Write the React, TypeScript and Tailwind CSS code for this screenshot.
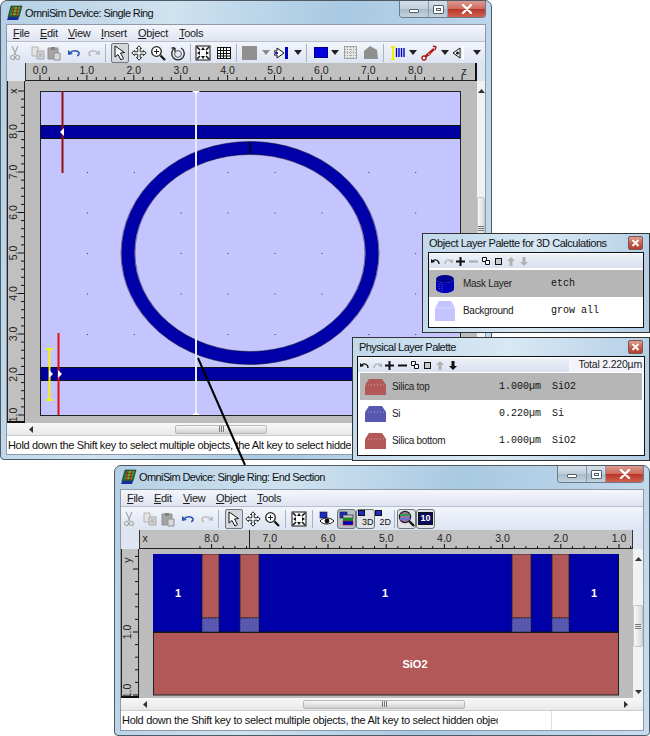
import React from "react";

const ui = "[font-family:'Liberation_Sans',Arial,sans-serif]";
const mono = "[font-family:'Liberation_Mono','Courier_New',monospace]";
const RF = "Liberation Sans";

const Logo = () => (
  <svg width="16" height="16" viewBox="0 0 16 16" className="shrink-0">
    <polygon points="4,1 15,1 12,12 1,12" fill="#1c7a30" stroke="#123" strokeWidth="0.6" />
    <polygon points="1,12 12,12 11,15 0,15" fill="#1a2a9a" />
    <path d="M6 3h7M5 6h7M4 9h7" stroke="#e0c020" strokeWidth="1.2" />
    <path d="M7 2 5 11M11 2 9 11" stroke="#b02020" strokeWidth="1.2" />
  </svg>
);

const Buttons = () => (
  <div className="flex h-[17px] w-[87px] shrink-0 overflow-hidden rounded-b-[4px] border border-t-0 border-[#6b7b88]">
    <div className="flex w-[29px] items-center justify-center border-r border-[#8a9aa8] bg-[linear-gradient(#d4dfe8,#c2d0dc_50%,#a9bac8_50%,#c2d2de)]">
      <div className="mt-[3px] h-[4px] w-[10px] rounded-[1px] border border-[#52606c] bg-white" />
    </div>
    <div className="flex w-[19px] items-center justify-center border-r border-[#8a9aa8] bg-[linear-gradient(#d4dfe8,#c2d0dc_50%,#a9bac8_50%,#c2d2de)]">
      <div className="flex h-[9px] w-[11px] items-center justify-center rounded-[1px] border border-[#52606c] bg-white">
        <div className="h-[3px] w-[5px] border border-[#52606c]" />
      </div>
    </div>
    <div className="flex flex-1 items-center justify-center bg-[linear-gradient(#dc9a90,#cf6a5c_50%,#b8332a_50%,#d0604c)]">
      <svg width="12" height="10" viewBox="0 0 12 10"><path d="M2 1l8 8M10 1 2 9" stroke="#fff" strokeWidth="2.4" strokeLinecap="round" /></svg>
    </div>
  </div>
);

const SmallClose = () => (
  <div className="flex h-[14px] w-[15px] items-center justify-center rounded-[2px] border border-[#7a5a50] bg-[linear-gradient(#e0a090,#c8604c_50%,#b83c2c)]">
    <svg width="9" height="8" viewBox="0 0 9 8"><path d="M1.5 1l6 6M7.5 1l-6 6" stroke="#fff" strokeWidth="1.8" /></svg>
  </div>
);

const Caret = ({ className = "" }: { className?: string }) => (
  <svg width="8" height="5" viewBox="0 0 8 5" className={"shrink-0 " + className}><polygon points="0,0 8,0 4,5" fill="#222" /></svg>
);
const CaretGray = ({ className = "" }: { className?: string }) => (
  <svg width="8" height="5" viewBox="0 0 8 5" className={"shrink-0 " + className}><polygon points="0,0 8,0 4,5" fill="#8a8a8a" /></svg>
);
const Sep = ({ className = "" }: { className?: string }) => (
  <div className={"h-[18px] w-px shrink-0 bg-[#a9b3c0] " + className} />
);

type IP = { className?: string };
const Ic = ({ className = "", children }: IP & { children: React.ReactNode }) => (
  <svg width="16" height="16" viewBox="0 0 16 16" fill="none" className={"shrink-0 " + className}>{children}</svg>
);
const Scissors = (p: IP) => (
  <Ic {...p}>
    <path d="M5 1l4 9M11 1 7 10" stroke="#a8a8a8" strokeWidth="1.2" />
    <circle cx="5.5" cy="12.5" r="2" stroke="#a8a8a8" strokeWidth="1.2" />
    <circle cx="10.5" cy="12.5" r="2" stroke="#a8a8a8" strokeWidth="1.2" />
  </Ic>
);
const CopyI = (p: IP) => (
  <Ic {...p}>
    <path d="M2 2h6v9H2z" fill="#e4e4e4" stroke="#b4b4b4" />
    <path d="M7 6h7v8H7z" fill="#d4d4d4" stroke="#a8a8a8" />
    <path d="M9 9h3M9 11h3" stroke="#a0a0a0" />
  </Ic>
);
const Paste = (p: IP) => (
  <Ic {...p}>
    <path d="M2 3h10v11H2z" fill="#a4a4a4" stroke="#909090" />
    <path d="M5 2h4v3H5z" fill="#808080" />
    <path d="M8 8h6v7H8z" fill="#d8d8d8" stroke="#909090" />
  </Ic>
);
const Undo = (p: IP) => (
  <Ic {...p}>
    <path d="M4 8c2-3 8-3 9 0 .3 1.3-.5 2.6-2 2.6" stroke="#2a58b0" strokeWidth="1.6" />
    <polygon points="2,5 7,9 2,10" fill="#2a58b0" />
  </Ic>
);
const Redo = (p: IP) => (
  <Ic {...p}>
    <path d="M12 8C10 5 4 5 3 8c-.3 1.3.5 2.6 2 2.6" stroke="#bcbcbc" strokeWidth="1.6" />
    <polygon points="14,5 9,9 14,10" fill="#bcbcbc" />
  </Ic>
);
const Pointer = () => (
  <div className="flex h-[20px] w-[18px] shrink-0 items-center justify-center rounded-[2px] border border-[#70767c] bg-[#d4d8de]">
    <svg width="15" height="16" viewBox="0 0 15 16"><path d="M2 1l0 11 3-2.5 3 5.5 2.5-1.5-3-5.5 4-.5z" fill="#fff" stroke="#111" /></svg>
  </div>
);
const Move = (p: IP) => (
  <Ic {...p}>
    <path d="M8 .8 10.5 3.5H9.2V6.8H12.5V5.5L15.2 8 12.5 10.5V9.2H9.2V12.5H10.5L8 15.2 5.5 12.5H6.8V9.2H3.5V10.5L.8 8 3.5 5.5V6.8H6.8V3.5H5.5Z" fill="#fff" stroke="#111" strokeWidth="0.9" />
  </Ic>
);
const Zoom = (p: IP) => (
  <Ic {...p}>
    <circle cx="6.5" cy="6.5" r="4.8" fill="#fff" stroke="#222" strokeWidth="1.3" />
    <path d="M4 6.5h5M6.5 4v5" stroke="#222" />
    <path d="M10.5 10.5l4.5 4.5" stroke="#111" strokeWidth="2.2" />
  </Ic>
);
const Rotate = (p: IP) => (
  <Ic {...p}>
    <path d="M5 3a6.3 6.3 0 1 0 6 0" stroke="#222" strokeWidth="1.3" />
    <path d="M5 3v4M5 3H1.5" stroke="#222" strokeWidth="1.3" />
    <circle cx="8" cy="9" r="3.4" stroke="#555" />
  </Ic>
);
const Fit = (p: IP) => (
  <Ic {...p}>
    <rect x="1" y="1" width="14" height="14" fill="#fff" stroke="#111" />
    <polygon points="8,2 10,5 6,5" fill="#111" /><polygon points="8,14 10,11 6,11" fill="#111" />
    <polygon points="2,8 5,6 5,10" fill="#111" /><polygon points="14,8 11,6 11,10" fill="#111" />
    <path d="M2 2l3 3M14 2l-3 3M2 14l3-3M14 14l-3-3" stroke="#111" strokeWidth="1.5" />
  </Ic>
);
const GridI = (p: IP) => (
  <Ic {...p}>
    <rect x="1.5" y="2.5" width="13" height="11" fill="#fff" stroke="#111" />
    <path d="M4.5 2.5v11M7.5 2.5v11M10.5 2.5v11M1.5 5.5h13M1.5 8.5h13M1.5 11h13" stroke="#111" />
  </Ic>
);
const ArrowBar = (p: IP) => (
  <Ic {...p}>
    <path d="M0 6h3V3l7 5-7 5v-3H0z" fill="#fff" stroke="#111" />
    <rect x="1" y="7" width="3" height="2" fill="#1a1ad0" />
    <rect x="11" y="2" width="3" height="12" fill="#0000c8" />
  </Ic>
);
const GridGray = (p: IP) => (
  <Ic {...p}>
    <rect x="1.5" y="1.5" width="12" height="12" fill="#e8e8e8" stroke="#a0a0a0" />
    <path d="M4.5 2v11M7.5 2v11M10.5 2v11M2 4.5h11M2 7.5h11M2 10.5h11" stroke="#a8a8a8" strokeDasharray="1 1" />
  </Ic>
);
const Poly = (p: IP) => (
  <Ic {...p}>
    <polygon points="7,1 14,5 15,14 1,14 1,6" fill="#8f8f8f" />
  </Ic>
);
const Lines = (p: IP) => (
  <Ic {...p}>
    <path d="M6.5 3v9M9 3v9M11.5 3v9M14 3v9" stroke="#0000c8" strokeWidth="1.4" />
    <path d="M3 2v12M1 2h4M1 14h4" stroke="#f0f000" strokeWidth="2" />
  </Ic>
);
const Wrench = (p: IP) => (
  <Ic {...p}>
    <path d="M3 13l10-9" stroke="#b01818" strokeWidth="2.4" />
    <circle cx="3" cy="13" r="2" fill="#fff" stroke="#b01818" strokeWidth="1.4" />
    <circle cx="8" cy="9" r="1.2" fill="#fff" stroke="#b01818" />
    <path d="M12 1l3 1-1 3" stroke="#b01818" strokeWidth="1.4" />
  </Ic>
);
const EyeWedge = (p: IP) => (
  <Ic {...p}>
    <path d="M1 8l7-5v10z" fill="#fff" stroke="#111" />
    <circle cx="5.5" cy="8" r="1.5" fill="#111" />
    <path d="M11 1v14" stroke="#fff" strokeWidth="2" />
  </Ic>
);
const Eye = (p: IP) => (
  <Ic {...p}>
    <rect x="1" y="1" width="7" height="6" fill="#1c2ccc" stroke="#111" strokeWidth="0.6" />
    <path d="M1 10c3-4 10-4 14 0-4 4-11 4-14 0z" fill="#fff" stroke="#111" />
    <circle cx="8" cy="10" r="2.4" fill="#111" />
  </Ic>
);
const ViewBtn = ({ on, children }: { on?: boolean; children: React.ReactNode }) => (
  <div className={"flex h-[20px] w-[19px] shrink-0 items-center justify-center rounded-[3px] border border-[#70767c] " + (on ? "bg-[#b8bec6]" : "bg-[#dfe3e8]")}>{children}</div>
);
const Stack = () => (
  <svg width="15" height="15" viewBox="0 0 15 15">
    <rect x="1" y="1" width="7" height="6" fill="#1c2ccc" stroke="#111" strokeWidth="0.6" />
    <rect x="4" y="4" width="10" height="3" fill="#c8c8c8" stroke="#111" strokeWidth="0.6" />
    <rect x="4" y="7" width="10" height="3" fill="#109020" />
    <rect x="4" y="10" width="10" height="4" fill="#0000c0" stroke="#c02020" strokeWidth="0.6" />
  </svg>
);
const DimIcon = ({ label }: { label: string }) => (
  <div className="relative h-[17px] w-[16px]">
    <div className="h-[6px] w-[7px] border border-[#111] bg-[#1c2ccc]" />
    <span className={"absolute bottom-[-1px] right-[0px] text-[9px] leading-[11px] text-[#111] " + ui}>{label}</span>
  </div>
);
const Magnify = () => (
  <svg width="17" height="17" viewBox="0 0 17 17">
    <circle cx="7" cy="7" r="5.6" fill="#a070a0" stroke="#222" strokeWidth="1.2" />
    <path d="M2 5h10" stroke="#30a050" strokeWidth="2" />
    <path d="M2 9h10" stroke="#7070d0" strokeWidth="2.5" />
    <path d="M11 11l5 5" stroke="#111" strokeWidth="2.4" />
  </svg>
);

const MenuBar = ({ items }: { items: [string, string][] }) => (
  <div className={"flex h-[17px] shrink-0 items-center border-b border-[#b9bfca] bg-[linear-gradient(#f4f6fb,#dfe4f1)] pl-[6px] text-[11px] tracking-[-0.3px] text-[#1a1a1a] " + ui}>
    {items.map(([a, cls]) => (
      <span key={a} className={cls}><span className="underline underline-offset-1">{a[0]}</span>{a.slice(1)}</span>
    ))}
  </div>
);

const Ruler1 = () => {
  const ticks = [];
  for (let i = 0; i <= 45; i++) {
    const x = 40 + (i * 46.9) / 5;
    ticks.push(<line key={i} x1={x} x2={x} y1={i % 5 === 0 ? 75 : 77} y2={80} stroke="#111" strokeWidth="1" />);
  }
  const labels = ["0.0", "1.0", "2.0", "3.0", "4.0", "5.0", "6.0", "7.0", "8.0"];
  return (
    <svg width="452" height="18" viewBox="25 63 452 18" className="block shrink-0">
      <rect x="25" y="63" width="452" height="18" fill="#c0c0c0" />
      <line x1="25.5" x2="25.5" y1="63" y2="81" stroke="#333" />
      <line x1="25" x2="477" y1="80.5" y2="80.5" stroke="#222" />
      <rect x="475" y="63" width="2" height="18" fill="#111" />
      {ticks}
      {labels.map((t, i) => (
        <text key={t} x={40 + i * 46.9} y="74" textAnchor="middle" fontSize="10.5" fill="#222" fontFamily={RF}>{t}</text>
      ))}
      <text x="464" y="75" textAnchor="middle" fontSize="10.5" fill="#222" fontFamily={RF}>z</text>
    </svg>
  );
};

const LeftRuler1 = () => {
  const ticks = [];
  for (let i = 0; i <= 40; i++) {
    const y = 415 - (i * 40.5) / 5;
    if (y < 91) break;
    ticks.push(<line key={i} x1={i % 5 === 0 ? 18 : 21} x2="24" y1={y} y2={y} stroke="#111" />);
  }
  return (
    <svg width="18" height="342" viewBox="7 81 18 342" className="block shrink-0">
      <rect x="7" y="81" width="18" height="342" fill="#c0c0c0" />
      <line x1="7.5" x2="7.5" y1="81" y2="423" stroke="#222" />
      <line x1="24.5" x2="24.5" y1="81" y2="423" stroke="#222" />
      <rect x="7" y="421" width="18" height="2" fill="#111" />
      {ticks}
      {["1.0", "2.0", "3.0", "4.0", "5.0", "6.0", "7.0", "8.0"].map((t, i) => {
        const y = 415 - i * 40.5;
        return <text key={t} transform={`translate(17 ${y}) rotate(-90)`} textAnchor="middle" fontSize="10.5" fill="#222" fontFamily={RF}>{t}</text>;
      })}
      <text transform="translate(17 91) rotate(-90)" textAnchor="middle" fontSize="10.5" fill="#222" fontFamily={RF}>x</text>
    </svg>
  );
};

const Canvas1 = () => {
  const dots = [];
  for (let i = 1; i < 9; i++) for (let j = 1; j < 8; j++) dots.push(<rect key={i + "-" + j} x={40 + i * 46.9} y={91 + j * 40.5} width="1" height="1" fill="#334" />);
  return (
    <svg width="421" height="325" viewBox="40 91 421 325" className="block overflow-visible">
      <rect x="40.5" y="91.5" width="420" height="324" fill="#c4c4ff" stroke="#222" />
      {dots}
      <rect x="40.5" y="125.5" width="420" height="13" fill="#0000a0" stroke="#111" />
      <rect x="40.5" y="367.5" width="420" height="13" fill="#0000a0" stroke="#111" />
      <ellipse cx="250" cy="253" rx="122" ry="105" fill="none" stroke="#0000a8" strokeWidth="13" />
      <ellipse cx="250" cy="253" rx="129" ry="111.5" fill="none" stroke="#111" strokeWidth="0.5" />
      <ellipse cx="250" cy="253" rx="115" ry="98.5" fill="none" stroke="#111" strokeWidth="0.5" />
      <line x1="250" x2="250" y1="142" y2="154" stroke="#000" strokeWidth="1.4" />
      <line x1="196" x2="196" y1="91" y2="415" stroke="#e8e8ff" strokeWidth="2" />
      <polygon points="192,91 200,91 196,94" fill="#fff" />
      <polygon points="192,415 200,415 196,412" fill="#fff" />
      <line x1="62.5" x2="62.5" y1="91" y2="173" stroke="#8c1010" strokeWidth="2" />
      <polygon points="60,132 64,128 64,136" fill="#fff" />
      <line x1="58.5" x2="58.5" y1="333" y2="415" stroke="#e01010" strokeWidth="2" />
      <polygon points="62,374 58,370 58,378" fill="#fff" />
      <path d="M49.5 349v51M46 349h7M46 400h7" stroke="#f4f400" strokeWidth="2" fill="none" />
      <polygon points="53,374 49,370 49,378" fill="#fff" />
    </svg>
  );
};

const VScroll = ({ thumb, gap, width }: { thumb: string; gap: string; width: string }) => (
  <div className={"flex shrink-0 flex-col items-center bg-[#f0f2f6] " + width}>
    <svg width="7" height="4" viewBox="0 0 7 4" className="mt-[8px] shrink-0"><polygon points="0,4 7,4 3.5,0" fill="#333" /></svg>
    <div className={"w-full shrink-0 " + gap} />
    <div className={"flex w-full shrink-0 flex-col items-center justify-center gap-px rounded-[2px] border border-[#c4c8cc] bg-[linear-gradient(90deg,#fafafa,#d8d8d8)] " + thumb}>
      <div className="h-px w-[6px] bg-[#777]" /><div className="h-px w-[6px] bg-[#777]" /><div className="h-px w-[6px] bg-[#777]" />
    </div>
    <div className="flex-1" />
    <svg width="7" height="4" viewBox="0 0 7 4" className="mb-[4px] shrink-0"><polygon points="0,0 7,0 3.5,4" fill="#333" /></svg>
  </div>
);

const HScroll = ({ left, width }: { left: string; width: string }) => (
  <div className="flex h-[12px] shrink-0 items-center bg-[linear-gradient(#f8f8f8,#e8e8e8)] pl-[22px] pr-[15px]">
    <svg width="4" height="7" viewBox="0 0 4 7" className="shrink-0"><polygon points="4,0 4,7 0,3.5" fill="#333" /></svg>
    <div className={"shrink-0 " + left} />
    <div className={"flex h-[9px] shrink-0 items-center justify-center gap-px rounded-[2px] border border-[#b8b8b8] bg-[linear-gradient(#f8f8f8,#d0d0d0)] " + width}>
      <div className="h-[6px] w-px bg-[#777]" /><div className="h-[6px] w-px bg-[#777]" /><div className="h-[6px] w-px bg-[#777]" />
    </div>
    <div className="flex-1" />
    <svg width="4" height="7" viewBox="0 0 4 7" className="shrink-0"><polygon points="0,0 0,7 4,3.5" fill="#333" /></svg>
  </div>
);

const STATUS = "Hold down the Shift key to select multiple objects, the Alt key to select hidden objects";

const Window1 = () => (
  <div className="absolute left-0 top-0 flex h-[460px] w-[492px] flex-col rounded-t-[7px] rounded-b-[4px] border border-[#4e5a64] bg-[linear-gradient(100deg,#b4cfe4,#cfe2f0_30%,#a9c9e2_60%,#c7dcee)] px-[5px] pb-[4px]">
    <div className="flex h-[23px] shrink-0 items-start justify-between">
      <div className={"flex items-center gap-[2px] pl-[1px] pt-[4px] text-[11px] leading-[16px] tracking-[-0.6px] text-[#111] " + ui}>
        <Logo /><span>OmniSim Device: Single Ring</span>
      </div>
      <Buttons />
    </div>
    <div className="flex flex-1 flex-col overflow-hidden border border-[#8d99a8] bg-white">
      <MenuBar items={[["File", "w-[27px]"], ["Edit", "w-[28px]"], ["View", "w-[33px]"], ["Insert", "w-[37px]"], ["Object", "w-[41px]"], ["Tools", ""]]} />
      <div className="flex h-[21px] shrink-0 items-center bg-[linear-gradient(#f2f5fb,#dde4f2)]">
        <Scissors /><CopyI className="ml-[7px]" /><Paste /><Undo className="ml-[4px]" /><Redo className="ml-[4px]" />
        <Sep className="ml-[3px]" /><div className="ml-[5px]"><Pointer /></div>
        <Move className="ml-[2px]" /><Zoom className="ml-[3px]" /><Rotate className="ml-[4px]" /><Sep className="ml-[4px]" />
        <Fit className="ml-[4px]" /><GridI className="ml-[5px]" /><Sep className="ml-[4px]" />
        <div className="ml-[5px] h-[14px] w-[15px] shrink-0 bg-[#8f8f8f]" /><CaretGray className="ml-[5px]" />
        <ArrowBar className="ml-[4px]" /><Caret className="ml-[4px]" /><Sep className="ml-[4px]" />
        <div className="ml-[7px] h-[11px] w-[14px] shrink-0 border border-[#000080] bg-[#0000e0]" /><Caret className="ml-[3px]" />
        <GridGray className="ml-[4px]" /><Poly className="ml-[4px]" /><Sep className="ml-[4px]" />
        <Lines className="ml-[6px]" /><Caret className="ml-[3px]" /><Wrench className="ml-[4px]" /><Caret className="ml-[4px]" />
        <EyeWedge className="ml-[3px]" /><Caret className="ml-[5px]" />
      </div>
      <div className="flex h-[18px] shrink-0">
        <div className="w-[18px] shrink-0 bg-[#dde4f2]" />
        <Ruler1 />
        <div className="flex-1 bg-[#dde4f2]" />
      </div>
      <div className="flex h-[342px] shrink-0">
        <LeftRuler1 />
        <div className="w-[452px] shrink-0 bg-[#bcbcbc] pl-[15px] pt-[10px]"><Canvas1 /></div>
        <VScroll width="w-[8px]" thumb="h-[62px]" gap="h-[104px]" />
      </div>
      <HScroll left="w-[142px]" width="w-[92px]" />
      <div className={"flex flex-1 items-center border-t border-[#c8ccd4] bg-white pl-[1px] text-[11px] tracking-[-0.33px] text-[#111] " + ui}>
        <div className="w-[343px] overflow-hidden whitespace-nowrap">{STATUS}</div>
      </div>
    </div>
  </div>
);

const Ruler2 = () => {
  const ticks = [];
  for (let i = -4; i <= 36; i++) {
    const x = 619 - (i * 58.2) / 5;
    if (x < 140 || x > 632) continue;
    ticks.push(<line key={i} x1={x} x2={x} y1={i % 5 === 0 ? 544 : 546} y2={549} stroke="#111" />);
  }
  return (
    <svg width="494" height="19" viewBox="139 530 494 19" className="block shrink-0">
      <rect x="139" y="530" width="494" height="19" fill="#c0c0c0" />
      <line x1="139.5" x2="139.5" y1="530" y2="549" stroke="#333" />
      <line x1="139" x2="633" y1="548.5" y2="548.5" stroke="#222" />
      <line x1="632.5" x2="632.5" y1="530" y2="549" stroke="#333" />
      <line x1="249.5" x2="249.5" y1="530" y2="549" stroke="#222" />
      {ticks}
      <text x="145" y="542" textAnchor="middle" fontSize="10.5" fill="#222" fontFamily={RF}>x</text>
      {["1.0", "2.0", "3.0", "4.0", "5.0", "6.0", "7.0", "8.0"].map((t, i) => (
        <text key={t} x={619 - i * 58.2} y="542" textAnchor="middle" fontSize="10.5" fill="#222" fontFamily={RF}>{t}</text>
      ))}
    </svg>
  );
};

const LeftRuler2 = () => {
  const ticks = [];
  for (let i = 0; i <= 11; i++) {
    const y = 695 - i * 12.6;
    ticks.push(<line key={i} x1={i % 5 === 0 ? 133 : 135} x2="138" y1={y} y2={y} stroke="#111" />);
  }
  return (
    <svg width="18" height="149" viewBox="121 549 18 149" className="block shrink-0">
      <rect x="121" y="549" width="18" height="149" fill="#c0c0c0" />
      <line x1="121.5" x2="121.5" y1="549" y2="698" stroke="#222" />
      <line x1="138.5" x2="138.5" y1="549" y2="698" stroke="#222" />
      <rect x="121" y="696" width="18" height="2" fill="#111" />
      {ticks}
      <text transform="translate(131 632) rotate(-90)" textAnchor="middle" fontSize="10.5" fill="#222" fontFamily={RF}>1.0</text>
      <text transform="translate(131 691) rotate(-90)" textAnchor="middle" fontSize="10.5" fill="#222" fontFamily={RF}>1.0</text>
      <text transform="translate(131 560) rotate(-90)" textAnchor="middle" fontSize="10.5" fill="#222" fontFamily={RF}>y</text>
    </svg>
  );
};

const Pillar = ({ x, w }: { x: number; w: number }) => (
  <g stroke="#222" strokeWidth="0.8">
    <rect x={x} y="554" width={w} height="64" fill="#b25858" />
    <rect x={x} y="618" width={w} height="14" fill="#5858b0" strokeDasharray="2 1" />
  </g>
);

const Canvas2 = () => (
  <svg width="467" height="142" viewBox="153 554 467 142" className="block">
    <rect x="153" y="554" width="466" height="78" fill="#0000a8" />
    <rect x="153.5" y="632.5" width="465" height="62.5" fill="#b25858" stroke="#222" />
    <line x1="153" x2="619" y1="632" y2="632" stroke="#111" />
    <line x1="618.5" x2="618.5" y1="554" y2="632" stroke="#111" />
    <Pillar x={202} w={17} />
    <Pillar x={240} w={19} />
    <Pillar x={512} w={19} />
    <Pillar x={552} w={17} />
    <g fill="#fff" fontSize="11" fontWeight="700" fontFamily={RF} textAnchor="middle">
      <text x="178" y="597">1</text>
      <text x="385" y="597">1</text>
      <text x="594" y="597">1</text>
      <text x="415" y="668">SiO2</text>
    </g>
  </svg>
);

const Window2 = () => (
  <div className="absolute left-[114px] top-[465px] flex h-[271px] w-[536px] flex-col rounded-t-[7px] rounded-b-[4px] border border-[#4e5a64] bg-[linear-gradient(100deg,#b4cfe4,#cfe2f0_30%,#a9c9e2_60%,#c7dcee)] px-[5px] pb-[4px]">
    <div className="flex h-[23px] shrink-0 items-start justify-between">
      <div className={"flex items-center gap-[2px] pl-[1px] pt-[3px] text-[11px] leading-[16px] tracking-[-0.6px] text-[#111] " + ui}>
        <Logo /><span>OmniSim Device: Single Ring: End Section</span>
      </div>
      <Buttons />
    </div>
    <div className="flex flex-1 flex-col overflow-hidden border border-[#8d99a8] bg-white">
      <MenuBar items={[["File", "w-[27px]"], ["Edit", "w-[29px]"], ["View", "w-[33px]"], ["Object", "w-[41px]"], ["Tools", ""]]} />
      <div className="flex h-[23px] shrink-0 items-center bg-[linear-gradient(#f2f5fb,#dde4f2)]">
        <Scissors /><CopyI className="ml-[5px]" /><Paste className="ml-[2px]" /><Undo className="ml-[4px]" /><Redo className="ml-[3px]" />
        <Sep className="ml-[3px]" /><div className="ml-[6px]"><Pointer /></div>
        <Move className="ml-[2px]" /><Zoom className="ml-[3px]" /><Sep className="ml-[5px]" />
        <Fit className="ml-[5px]" /><Sep className="ml-[5px]" />
        <Eye className="ml-[6px]" />
        <div className="ml-[2px]"><ViewBtn on><Stack /></ViewBtn></div>
        <ViewBtn><DimIcon label="3D" /></ViewBtn>
        <DimIcon label="2D" />
        <Sep className="ml-[3px]" />
        <div className="ml-[2px]"><ViewBtn><Magnify /></ViewBtn></div>
        <ViewBtn>
          <div className={"flex h-[13px] w-[15px] items-center justify-center border border-[#111] bg-[#0a0a60] text-[9px] font-bold leading-none text-white " + ui}>10</div>
        </ViewBtn>
      </div>
      <div className="flex h-[19px] shrink-0">
        <div className="w-[18px] shrink-0 bg-[#dde4f2]" />
        <Ruler2 />
        <div className="flex-1 bg-[#dde4f2]" />
      </div>
      <div className="flex h-[149px] shrink-0">
        <LeftRuler2 />
        <div className="w-[494px] shrink-0 bg-[#bcbcbc] pl-[14px] pt-[5px]"><Canvas2 /></div>
        <VScroll width="w-[10px]" thumb="h-[42px]" gap="h-[44px]" />
      </div>
      <HScroll left="w-[156px]" width="w-[162px]" />
      <div className={"flex flex-1 items-center border-t border-[#c8ccd4] bg-white pl-[1px] text-[11px] tracking-[-0.3px] text-[#111] " + ui}>
        <div className="w-[376px] overflow-hidden whitespace-nowrap">{STATUS}</div>
        <div className="h-full w-[54px] border-r border-[#e0e0e0]" />
      </div>
    </div>
  </div>
);

const Slot = ({ children }: { children: React.ReactNode }) => (
  <div className="flex h-[12px] w-[12.7px] shrink-0 items-center justify-center">{children}</div>
);

const MiniTools = ({ down }: { down?: boolean }) => (
  <div className="flex items-center">
    <Slot><svg width="9" height="7" viewBox="0 0 9 7"><path d="M2 3c2-2 6-1 6 3" stroke="#111" strokeWidth="1.3" fill="none" /><polygon points="0,1 4,4 0,5" fill="#111" /></svg></Slot>
    <Slot><svg width="9" height="7" viewBox="0 0 9 7"><path d="M7 3C5 1 1 2 1 6" stroke="#b0b0b0" strokeWidth="1.3" fill="none" /><polygon points="9,1 5,4 9,5" fill="#b0b0b0" /></svg></Slot>
    <Slot><svg width="9" height="9" viewBox="0 0 9 9"><path d="M4.5 0v9M0 4.5h9" stroke="#111" strokeWidth="2" /></svg></Slot>
    <Slot><svg width="9" height="9" viewBox="0 0 9 9"><path d="M0 4.5h9" stroke={down ? "#111" : "#a8a8a8"} strokeWidth="2" /></svg></Slot>
    <Slot><svg width="8" height="8" viewBox="0 0 8 8"><path d="M.5.5h4v4h-4z" fill="#fff" stroke="#111" /><path d="M3.5 3.5h4v4h-4z" fill="#fff" stroke="#111" /></svg></Slot>
    <Slot><svg width="7" height="7" viewBox="0 0 7 7"><rect x="0.5" y="0.5" width="6" height="6" fill="#ccc" stroke="#111" /></svg></Slot>
    <Slot><svg width="8" height="9" viewBox="0 0 8 9"><path d="M4 0 8 4H5.5V9h-3V4H0z" fill="#b0b0b0" /></svg></Slot>
    <Slot><svg width="8" height="9" viewBox="0 0 8 9"><path d="M4 9 8 5H5.5V0h-3V5H0z" fill={down ? "#111" : "#b0b0b0"} /></svg></Slot>
  </div>
);

const Layer3D = ({ fill, dash }: { fill: string; dash: string }) => (
  <svg width="21" height="17" viewBox="0 0 21 17" className="shrink-0">
    <polygon points="4,1 17,1 21,7 21,17 0,17 0,7" fill={fill} />
    <path d="M0 7h21" stroke={dash} strokeWidth="0.6" strokeDasharray="1 2" fill="none" />
  </svg>
);

const LayerRow = ({ on, name, val, mat }: { on?: boolean; name: string; val: string; mat: string }) => (
  <div className={"flex h-[27px] items-center pl-[5px] " + (on ? "bg-[#b6b6b6]" : "bg-white")}>
    <Layer3D fill={name === "Si" ? "#5858b0" : "#b25858"} dash={name === "Si" ? "#d0d0f0" : "#f0d0d0"} />
    <span className={"ml-[6px] w-[107px] text-[10px] leading-none tracking-[-0.3px] text-[#222] " + ui}>{name}</span>
    <span className={"w-[53px] whitespace-nowrap text-[10px] leading-none text-[#111] " + mono}>{val}</span>
    <span className={"text-[10px] leading-none text-[#111] " + mono}>{mat}</span>
  </div>
);

const Palette1 = () => (
  <div className="absolute left-[422px] top-[233px] flex h-[100px] w-[228px] flex-col border border-[#333] bg-[linear-gradient(100deg,#c0d8ea,#d8e8f4_50%,#b0cce4)] px-[5px] pb-[4px]">
    <div className={"flex h-[18px] shrink-0 items-center justify-between pr-px text-[11px] tracking-[-0.45px] text-[#111] " + ui}>
      <span className="whitespace-nowrap pl-px">Object Layer Palette for 3D Calculations</span>
      <SmallClose />
    </div>
    <div className="flex flex-1 flex-col border border-[#111] bg-white py-px">
      <div className="flex h-[14px] shrink-0 items-center bg-[linear-gradient(#eef1f8,#d8e0f0)]"><MiniTools /></div>
      <div className="mt-[2px] flex h-[27px] items-center bg-[#b6b6b6] pl-[6px]">
        <svg width="20" height="20" viewBox="0 0 20 20" className="shrink-0">
          <ellipse cx="10" cy="5" rx="9" ry="4" fill="#000090" />
          <path d="M1 5v10c0 2 4 4 9 4s9-2 9-4V5c0 2-4 4-9 4S1 7 1 5z" fill="#0000b8" />
          <path d="M4 10v6M7 10v7" stroke="#5050d8" strokeDasharray="1 1" />
        </svg>
        <span className={"ml-[8px] w-[88px] text-[10px] leading-none tracking-[-0.3px] text-[#222] " + ui}>Mask Layer</span>
        <span className={"text-[10px] leading-none text-[#111] " + mono}>etch</span>
      </div>
      <div className="flex h-[28px] items-center bg-white pl-[6px]">
        <svg width="20" height="22" viewBox="0 0 20 22" className="shrink-0">
          <polygon points="4,1 16,1 20,8 20,21 0,21 0,8" fill="#c4c4ff" />
          <path d="M0 8h20" stroke="#e4e4ff" strokeDasharray="1.5 1" />
        </svg>
        <span className={"ml-[8px] w-[88px] text-[10px] leading-none tracking-[-0.3px] text-[#222] " + ui}>Background</span>
        <span className={"text-[10px] leading-none text-[#111] " + mono}>grow all</span>
      </div>
    </div>
  </div>
);

const Palette2 = () => (
  <div className="absolute left-[352px] top-[337px] flex h-[124px] w-[298px] flex-col border border-[#333] bg-[linear-gradient(100deg,#c0d8ea,#d8e8f4_50%,#b0cce4)] px-[4px] pb-[4px]">
    <div className={"flex h-[18px] shrink-0 items-center justify-between pr-[2px] text-[11px] tracking-[-0.55px] text-[#111] " + ui}>
      <span className="pl-[2px]">Physical Layer Palette</span>
      <SmallClose />
    </div>
    <div className="flex flex-1 flex-col border border-[#111] bg-white py-px">
      <div className="flex h-[14px] shrink-0 items-center justify-between bg-[linear-gradient(#eef1f8,#d8e0f0)]">
        <MiniTools down />
        <div className={"flex h-full w-[75px] items-center justify-end whitespace-nowrap bg-[#f2f4fa] pr-[2px] text-[10.5px] tracking-[-0.2px] text-[#222] " + ui}>Total 2.220µm</div>
      </div>
      <div className="mt-px flex flex-col px-[2px]">
        <LayerRow on name="Silica top" val="1.000µm" mat="SiO2" />
        <LayerRow name="Si" val="0.220µm" mat="Si" />
        <LayerRow name="Silica bottom" val="1.000µm" mat="SiO2" />
      </div>
    </div>
  </div>
);

export default function App() {
  return (
    <div className="relative h-[736px] w-[650px] overflow-hidden bg-white">
      <Window1 />
      <Window2 />
      <Palette1 />
      <Palette2 />
      <svg width="70" height="120" viewBox="190 350 70 120" className="absolute left-[190px] top-[350px]">
        <line x1="198" y1="358" x2="245" y2="465" stroke="#000" strokeWidth="2" />
      </svg>
    </div>
  );
}
